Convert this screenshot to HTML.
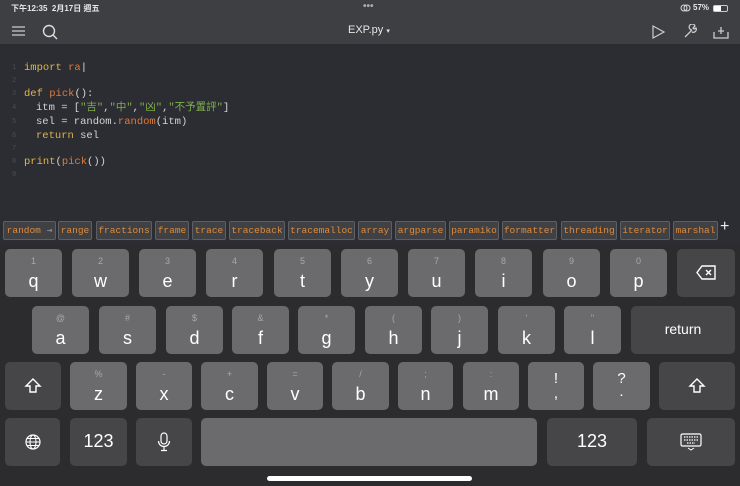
<!DOCTYPE html>
<html><head><meta charset="utf-8"><style>
*{margin:0;padding:0;box-sizing:border-box}
body{width:740px;height:486px;overflow:hidden;background:#2b2d32;font-family:"Liberation Sans","Noto Sans CJK TC",sans-serif;position:relative}
.hdr{position:absolute;left:0;top:0;width:740px;height:44px;background:#3d3f43}
.st{position:absolute;top:3px;font-size:8px;color:#e8e8e8;font-weight:bold}
.ttl{position:absolute;left:348px;top:24px;font-size:11px;color:#e6e6e6}
.code{position:absolute;left:0;top:61px;font-family:"Liberation Mono","Noto Sans CJK TC",monospace;font-size:10.5px;color:#d4d4d4}
.ln{position:absolute;height:14px;white-space:pre;line-height:14px}
.n{position:absolute;left:12px;color:#4a4d52;font-size:7px}
.k{color:#e0b54a}.f{color:#e07a3a}.s{color:#7fb04a}
.chip{position:absolute;top:221px;height:19px;background:#3f4145;border:1px solid #5c5f63;border-radius:2px;font-family:"Liberation Mono",monospace;font-size:9.5px;color:#e08a3a;line-height:17px;text-align:center}
.kb{position:absolute;left:0;top:244px;width:740px;height:242px;background:#2c2c2e}
.key{position:absolute;background:#6b6b6d;border-radius:5px;color:#fff;text-align:center}
.key .t{position:absolute;left:0;right:0;top:7px;font-size:9px;color:#a9a9ab}
.key .m{position:absolute;left:0;right:0;top:22px;font-size:18px}
.sp{background:#464648}
</style></head><body>
<div class="hdr">
<div class="st" style="left:11px">下午12:35&nbsp;&nbsp;2月17日 週五</div>
<div class="st" style="left:363px;color:#aaa;top:1px;font-size:10px">•••</div>
<div class="st" style="left:693px">57%</div>
<div style="position:absolute;left:713px;top:5px;width:15px;height:7px;border:1px solid #ccc;border-radius:2px"><div style="width:7px;height:5px;background:#fff"></div></div>
<svg style="position:absolute;left:680px;top:4px" width="11" height="8" viewBox="0 0 11 8"><circle cx="4" cy="4" r="3" fill="none" stroke="#ddd"/><circle cx="7" cy="4" r="3" fill="none" stroke="#ddd"/></svg>
<svg style="position:absolute;left:12px;top:26px" width="13" height="10"><path d="M0 1h13M0 5h13M0 9h13" stroke="#ccc" stroke-width="1.3"/></svg>
<svg style="position:absolute;left:42px;top:24px" width="16" height="16"><circle cx="7" cy="7" r="5.5" fill="none" stroke="#ddd" stroke-width="1.4"/><path d="M11 11l4 4" stroke="#ddd" stroke-width="1.4"/></svg>
<div class="ttl">EXP.py <span style="font-size:7px">▾</span></div>
<svg style="position:absolute;left:652px;top:25px" width="13" height="14"><path d="M1 1l11 6-11 6z" fill="none" stroke="#ccc" stroke-width="1.2"/></svg>
<svg style="position:absolute;left:683px;top:24px" width="15" height="15"><path d="M2 13l7-7M9 6a3 3 0 1 1 3 -4l-2 2 1 1 2-1a3 3 0 0 1-4 4" fill="none" stroke="#ccc" stroke-width="1.3"/></svg>
<svg style="position:absolute;left:713px;top:25px" width="16" height="14"><path d="M1 7v6h14V7M8 2v7M5 6h6" fill="none" stroke="#ccc" stroke-width="1.3"/></svg>
</div>
<div class="code">
<div class="ln" style="top:0"><span class="n">1</span><span style="position:absolute;left:24px"><span class="k">import</span> <span class="f">ra</span><span style="color:#ddd">|</span></span></div>
<div class="ln" style="top:13px"><span class="n">2</span></div>
<div class="ln" style="top:26px"><span class="n">3</span><span style="position:absolute;left:24px"><span class="k">def</span> <span class="f">pick</span>():</span></div>
<div class="ln" style="top:40px"><span class="n">4</span><span style="position:absolute;left:36px">itm = [<span class="s">"吉"</span>,<span class="s">"中"</span>,<span class="s">"凶"</span>,<span class="s">"不予置評"</span>]</span></div>
<div class="ln" style="top:54px"><span class="n">5</span><span style="position:absolute;left:36px">sel = random.<span class="f">random</span>(itm)</span></div>
<div class="ln" style="top:68px"><span class="n">6</span><span style="position:absolute;left:36px"><span class="k">return</span> sel</span></div>
<div class="ln" style="top:81px"><span class="n">7</span></div>
<div class="ln" style="top:94px"><span class="n">8</span><span style="position:absolute;left:24px"><span class="k">print</span>(<span class="f">pick</span>())</span></div>
<div class="ln" style="top:107px"><span class="n">9</span></div>
</div>
<div class="chip" style="left:3px;width:53px">random <span style="color:#888">⇥</span></div>
<div class="chip" style="left:58px;width:34px">range</div>
<div class="chip" style="left:96px;width:56px">fractions</div>
<div class="chip" style="left:155px;width:34px">frame</div>
<div class="chip" style="left:192px;width:34px">trace</div>
<div class="chip" style="left:229px;width:56px">traceback</div>
<div class="chip" style="left:288px;width:67px">tracemalloc</div>
<div class="chip" style="left:358px;width:34px">array</div>
<div class="chip" style="left:395px;width:51px">argparse</div>
<div class="chip" style="left:449px;width:50px">paramiko</div>
<div class="chip" style="left:502px;width:55px">formatter</div>
<div class="chip" style="left:561px;width:56px">threading</div>
<div class="chip" style="left:620px;width:50px">iterator</div>
<div class="chip" style="left:673px;width:45px">marshal</div>
<div style="position:absolute;left:720px;top:218px;color:#eee;font-size:16px">+</div>
<div class="kb"></div>
<div class="key" style="left:5px;top:249px;width:57px;height:48px"><div class="t">1</div><div class="m">q</div></div>
<div class="key" style="left:72px;top:249px;width:57px;height:48px"><div class="t">2</div><div class="m">w</div></div>
<div class="key" style="left:139px;top:249px;width:57px;height:48px"><div class="t">3</div><div class="m">e</div></div>
<div class="key" style="left:206px;top:249px;width:57px;height:48px"><div class="t">4</div><div class="m">r</div></div>
<div class="key" style="left:274px;top:249px;width:57px;height:48px"><div class="t">5</div><div class="m">t</div></div>
<div class="key" style="left:341px;top:249px;width:57px;height:48px"><div class="t">6</div><div class="m">y</div></div>
<div class="key" style="left:408px;top:249px;width:57px;height:48px"><div class="t">7</div><div class="m">u</div></div>
<div class="key" style="left:475px;top:249px;width:57px;height:48px"><div class="t">8</div><div class="m">i</div></div>
<div class="key" style="left:543px;top:249px;width:57px;height:48px"><div class="t">9</div><div class="m">o</div></div>
<div class="key" style="left:610px;top:249px;width:57px;height:48px"><div class="t">0</div><div class="m">p</div></div>
<div class="key sp" style="left:677px;top:249px;width:58px;height:48px"><svg style="margin-top:16px" width="20" height="15"><path d="M6 1h13v13H6L1 7.5z" fill="none" stroke="#fff" stroke-width="1.4"/><path d="M10 5l5 5M15 5l-5 5" stroke="#fff" stroke-width="1.4"/></svg></div>
<div class="key" style="left:32px;top:306px;width:57px;height:48px"><div class="t">@</div><div class="m">a</div></div>
<div class="key" style="left:99px;top:306px;width:57px;height:48px"><div class="t">#</div><div class="m">s</div></div>
<div class="key" style="left:166px;top:306px;width:57px;height:48px"><div class="t">$</div><div class="m">d</div></div>
<div class="key" style="left:232px;top:306px;width:57px;height:48px"><div class="t">&amp;</div><div class="m">f</div></div>
<div class="key" style="left:298px;top:306px;width:57px;height:48px"><div class="t">*</div><div class="m">g</div></div>
<div class="key" style="left:365px;top:306px;width:57px;height:48px"><div class="t">(</div><div class="m">h</div></div>
<div class="key" style="left:431px;top:306px;width:57px;height:48px"><div class="t">)</div><div class="m">j</div></div>
<div class="key" style="left:498px;top:306px;width:57px;height:48px"><div class="t">'</div><div class="m">k</div></div>
<div class="key" style="left:564px;top:306px;width:57px;height:48px"><div class="t">"</div><div class="m">l</div></div>
<div class="key sp" style="left:631px;top:306px;width:104px;height:48px"><div style="margin-top:15px;font-size:14px">return</div></div>
<div class="key sp" style="left:5px;top:362px;width:56px;height:48px"><svg style="margin-top:15px" width="18" height="18"><path d="M9 2L2 9h4v6h6V9h4z" fill="none" stroke="#fff" stroke-width="1.4"/></svg></div>
<div class="key" style="left:70px;top:362px;width:57px;height:48px"><div class="t">%</div><div class="m">z</div></div>
<div class="key" style="left:136px;top:362px;width:56px;height:48px"><div class="t">-</div><div class="m">x</div></div>
<div class="key" style="left:201px;top:362px;width:57px;height:48px"><div class="t">+</div><div class="m">c</div></div>
<div class="key" style="left:267px;top:362px;width:56px;height:48px"><div class="t">=</div><div class="m">v</div></div>
<div class="key" style="left:332px;top:362px;width:57px;height:48px"><div class="t">/</div><div class="m">b</div></div>
<div class="key" style="left:398px;top:362px;width:55px;height:48px"><div class="t">;</div><div class="m">n</div></div>
<div class="key" style="left:463px;top:362px;width:56px;height:48px"><div class="t">:</div><div class="m">m</div></div>
<div class="key" style="left:528px;top:362px;width:56px;height:48px"><div class="m" style="top:8px;font-size:15px">!</div><div class="m" style="top:23px;font-size:15px">,</div></div>
<div class="key" style="left:593px;top:362px;width:57px;height:48px"><div class="m" style="top:8px;font-size:15px">?</div><div class="m" style="top:21px;font-size:15px">.</div></div>
<div class="key sp" style="left:659px;top:362px;width:76px;height:48px"><svg style="margin-top:15px" width="18" height="18"><path d="M9 2L2 9h4v6h6V9h4z" fill="none" stroke="#fff" stroke-width="1.4"/></svg></div>
<div class="key sp" style="left:5px;top:418px;width:55px;height:48px"><svg style="margin-top:16px" width="16" height="16"><circle cx="8" cy="8" r="7" fill="none" stroke="#fff" stroke-width="1.2"/><ellipse cx="8" cy="8" rx="3" ry="7" fill="none" stroke="#fff" stroke-width="1.1"/><path d="M1 8h14M2 4.5h12M2 11.5h12" stroke="#fff" stroke-width="1"/></svg></div>
<div class="key sp" style="left:70px;top:418px;width:57px;height:48px"><div style="margin-top:13px;font-size:18px">123</div></div>
<div class="key sp" style="left:136px;top:418px;width:56px;height:48px"><svg style="margin-top:14px" width="14" height="20"><rect x="4" y="1" width="6" height="11" rx="3" fill="none" stroke="#fff" stroke-width="1.2"/><path d="M1.5 9a5.5 5.5 0 0 0 11 0M7 14.5v4M4 18.5h6" fill="none" stroke="#fff" stroke-width="1.2"/></svg></div>
<div class="key" style="left:201px;top:418px;width:336px;height:48px"></div>
<div class="key sp" style="left:547px;top:418px;width:90px;height:48px"><div style="margin-top:13px;font-size:18px">123</div></div>
<div class="key sp" style="left:647px;top:418px;width:88px;height:48px"><svg style="margin-top:15px" width="22" height="18"><rect x="1" y="1" width="20" height="12" rx="1.5" fill="none" stroke="#fff" stroke-width="1.2"/><path d="M4 4h14M4 7h14M7 10h8" stroke="#fff" stroke-width="1.2" stroke-dasharray="1.5 1"/><path d="M8 15l3 2 3-2" fill="none" stroke="#fff"/></svg></div>
<div style="position:absolute;left:267px;top:476px;width:205px;height:5px;border-radius:3px;background:#fff"></div>
</body></html>
